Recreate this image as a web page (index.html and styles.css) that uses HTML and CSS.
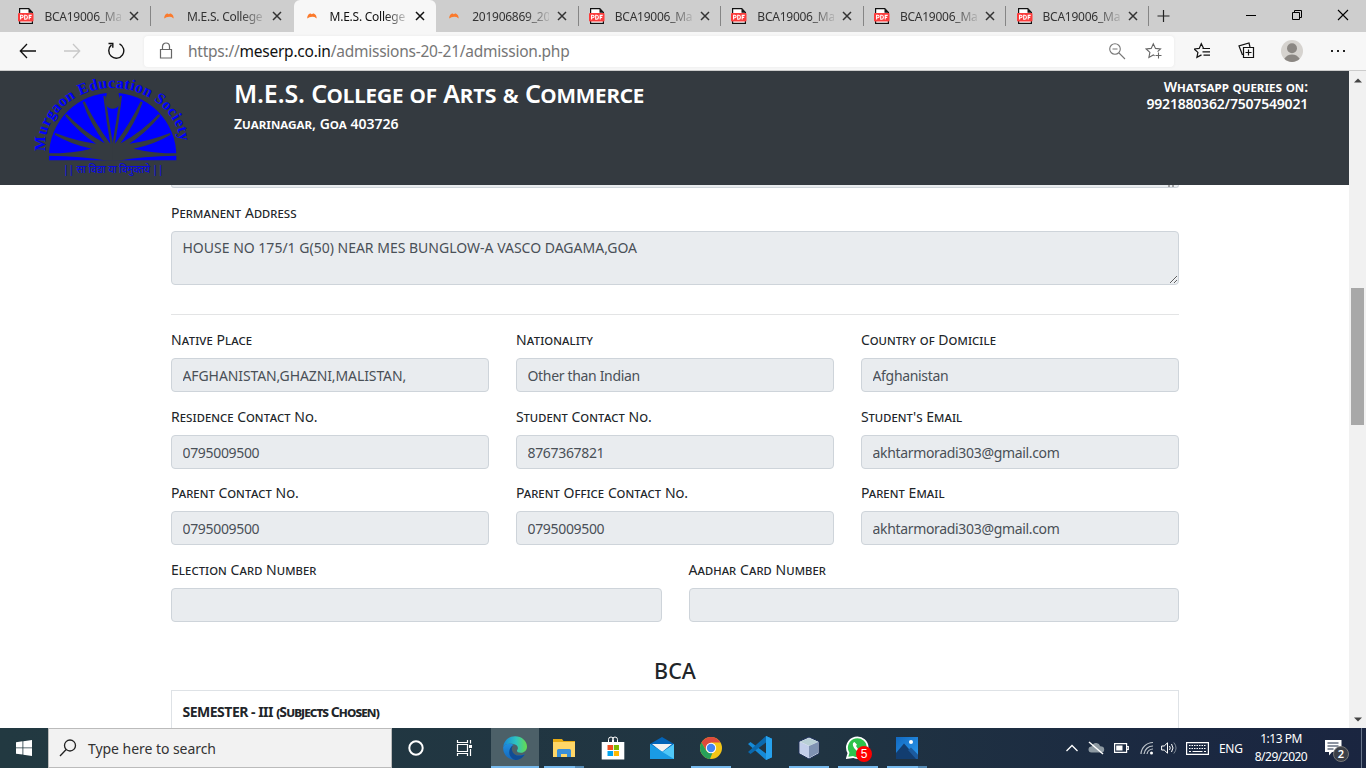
FILE: index.html
```html
<!DOCTYPE html>
<html lang="en">
<head>
<meta charset="utf-8">
<title>M.E.S. College</title>
<link rel="stylesheet" href="styles.css">
</head>
<body>
<svg class="defs" width="0" height="0">
  <symbol id="pdf" viewBox="0 0 16 16"><path d="M1.6.6h9.2l3.6 3.8v11H1.6z" fill="#fff" stroke="#111" stroke-width="1.2"/><path d="M10.5.8v4h4z" fill="#111"/><rect y="5" width="15.5" height="8.6" rx="1" fill="#fb3c3c"/><path d="M2.6 11.5V7.3h1.2q1.3 0 1.3 1.2T3.800 9.700H2.600M6.700 7.300v4h1q1.700 0 1.700-2t-1.700-2zM11.200 11.600V7.400h2.500M11.200 9.400h2" fill="none" stroke="#fff" stroke-width="1.100"/></symbol>
  <symbol id="mes" viewBox="0 0 16 16"><path d="M3.300 10.500C3 7.500 5 5.300 6.600 5.400l1.200.8 1.300-.8c2 0 3.800 2.400 3.500 5.100L10.500 9Q8 8.200 5.400 9.200z" fill="#fb7a2c"/></symbol>
  <symbol id="x" viewBox="0 0 10 10"><path d="M1 1l8 8M9 1L1 9" fill="none" stroke="currentColor" stroke-width="1.500"/></symbol>
</svg>

<div class="tabs">
  <div class="tab"><svg class="fav"><use href="#pdf"/></svg><span class="title">BCA19006_Ma</span><svg class="close"><use href="#x"/></svg></div>
  <div class="tab before-active"><svg class="fav"><use href="#mes"/></svg><span class="title">M.E.S. College</span><svg class="close"><use href="#x"/></svg></div>
  <div class="tab active"><svg class="fav"><use href="#mes"/></svg><span class="title">M.E.S. College</span><svg class="close"><use href="#x"/></svg></div>
  <div class="tab"><svg class="fav"><use href="#mes"/></svg><span class="title">201906869_20</span><svg class="close"><use href="#x"/></svg></div>
  <div class="tab"><svg class="fav"><use href="#pdf"/></svg><span class="title">BCA19006_Ma</span><svg class="close"><use href="#x"/></svg></div>
  <div class="tab"><svg class="fav"><use href="#pdf"/></svg><span class="title">BCA19006_Ma</span><svg class="close"><use href="#x"/></svg></div>
  <div class="tab"><svg class="fav"><use href="#pdf"/></svg><span class="title">BCA19006_Ma</span><svg class="close"><use href="#x"/></svg></div>
  <div class="tab last"><svg class="fav"><use href="#pdf"/></svg><span class="title">BCA19006_Ma</span><svg class="close"><use href="#x"/></svg></div>
  <svg class="plus" width="14" height="14"><path d="M6.500 1v12M.5 7h12" stroke="#222" stroke-width="1.200"/></svg>
  <div class="winbtns">
    <svg width="12" height="12"><path d="M1 6.500h10" stroke="#000"/></svg>
    <svg width="12" height="12"><path d="M1.500 3.500h7v7h-7zM3.500 3.500v-2h7v7h-2" fill="none" stroke="#000"/></svg>
    <svg width="12" height="12"><path d="M1 1l10 10M11 1L1 11" stroke="#000" stroke-width="1.100"/></svg>
  </div>
</div>

<div class="toolbar">
  <div class="nav">
    <svg width="18" height="16"><path d="M17 8H1.500M8 1L1.300 8 8 15" fill="none" stroke="#111" stroke-width="1.300"/></svg>
    <svg width="18" height="16"><path d="M1 8h15.500M10 1l6.700 7L10 15" fill="none" stroke="#c8c8c8" stroke-width="1.300"/></svg>
    <svg width="18" height="18"><path d="M12.500 1.900A7.500 7.500 0 1 1 4.500 2.900M1.500 1.500h4.300v4.300" fill="none" stroke="#111" stroke-width="1.400"/></svg>
  </div>
  <div class="address">
    <svg width="14" height="18"><path d="M1.500 7.500h11v8.500h-11zM3.500 7.500V4.500a3.500 3.500 0 0 1 7 0v3" fill="none" stroke="#666" stroke-width="1.200"/></svg>
    <span class="url">https://<b>meserp.co.in</b>/admissions-20-21/admission.php</span>
    <svg class="mag" width="18" height="18"><circle cx="7" cy="7" r="5.300" fill="none" stroke="#777" stroke-width="1.100"/><path d="M4.500 7h5M11 11l6 6" stroke="#777" stroke-width="1.100"/></svg>
    <svg width="18" height="18"><path d="M12.600 9.600L15.500 7l-5-.6L8.300 1.700 6.200 6.400l-5 .6 3.700 3.400-1 5 4.400-2.500 1.300.8M10.500 13.500h6M13.500 10.500v6" fill="none" stroke="#666" stroke-width="1.100"/></svg>
  </div>
  <div class="actions">
    <svg width="18" height="18"><path d="M9.500 6.200L7.300 1.700 5.200 6.400l-5 .6 3.700 3.400-1 5 4.600-2.500M8.500 6.500H16M8.500 9.800H16M9.500 13.200H16M7.300 1.700l2.200 4.500" fill="none" stroke="#111" stroke-width="1.200"/></svg>
    <svg width="18" height="18"><path d="M5.500 5.500h10v10h-10zM10.500 7.500v6M7.500 10.500h6M4.500 13L1 4l10-3 1 4" fill="none" stroke="#111" stroke-width="1.200"/></svg>
    <svg width="22" height="22"><circle cx="11" cy="11" r="11" fill="#d6d3cf"/><circle cx="11" cy="8.200" r="5" fill="#8b8783"/><path d="M3.300 18.800Q6 14.500 11 14.500t7.700 4.300A11 11 0 0 1 3.300 18.800z" fill="#8b8783"/></svg>
    <svg width="18" height="4"><path d="M2 1h2v2H2zM8 1h2v2H8zM14 1h2v2h-2z" fill="#222"/></svg>
  </div>
</div>

<div class="window">
  <div class="page">
    <header class="banner">
      <svg class="logo" width="160" height="105" viewBox="96 15 480 315">
        <path id="arc" d="M138 243C122 152 214 54 338 54S554 152 538 243" fill="none"/>
        <text class="arc-text"><textPath href="#arc" textLength="592" lengthAdjust="spacing">Murgaon Education Society</textPath></text>
        <path d="M147 271V258A191 190 0 0 1 529 258V271z" fill="#00f"/>
        <g fill="#343a40">
          <path id="rays" d="M145 250Q220 250 275 236 215 224 164 194L166 189Q230 214 288 221 240 190 195 137L200 132Q250 185 314 220 270 160 248 97L254 94Q285 160 331 221 318 150 310 78L316 77Q328 160 339 222V272H322Q250 258 145 257z"/>
          <use href="#rays" transform="translate(676 0) scale(-1 1)"/>
          <path d="M318 64Q323 74 318 82A23 23 0 1 0 358 82Q353 74 358 64z"/>
        </g>
        <text class="motto" x="190" y="309" textLength="300" lengthAdjust="spacingAndGlyphs">|| सा विद्या या विमुक्तये ||</text>
      </svg>
      <div class="heading"><h1>M.E.S. College of Arts &amp; Commerce</h1><p>Zuarinagar, Goa 403726</p></div>
      <div class="contact"><div class="q">Whatsapp queries on:</div><div class="num">9921880362/7507549021</div></div>
    </header>
    <main class="form">
      <div class="prev"><svg width="8" height="2"><path d="M1 0v2M5 0v2" stroke="#555"/></svg></div>
      <div class="group address-group"><label>Permanent Address</label><textarea readonly>HOUSE NO 175/1 G(50) NEAR MES BUNGLOW-A VASCO DAGAMA,GOA</textarea></div>
      <hr>
      <div class="row">
        <div class="group"><label>Native Place</label><input class="caps" readonly value="AFGHANISTAN,GHAZNI,MALISTAN,"></div>
        <div class="group"><label>Nationality</label><input readonly value="Other than Indian"></div>
        <div class="group"><label>Country of Domicile</label><input readonly value="Afghanistan"></div>
      </div>
      <div class="row">
        <div class="group"><label>Residence Contact No.</label><input readonly value="0795009500"></div>
        <div class="group"><label>Student Contact No.</label><input readonly value="8767367821"></div>
        <div class="group"><label>Student's Email</label><input readonly value="akhtarmoradi303@gmail.com"></div>
      </div>
      <div class="row">
        <div class="group"><label>Parent Contact No.</label><input readonly value="0795009500"></div>
        <div class="group"><label>Parent Office Contact No.</label><input readonly value="0795009500"></div>
        <div class="group"><label>Parent Email</label><input readonly value="akhtarmoradi303@gmail.com"></div>
      </div>
      <div class="row">
        <div class="group"><label>Election Card Number</label><input readonly></div>
        <div class="group"><label>Aadhar Card Number</label><input readonly></div>
      </div>
      <h2>BCA</h2>
      <div class="subjects">SEMESTER - III <span>(Subjects Chosen)</span></div>
    </main>
  </div>
  <div class="scrollbar">
    <svg width="8" height="5"><path d="M0 4.500L4 .5l4 4z" fill="#444"/></svg>
    <div class="thumb"></div>
    <svg width="8" height="5"><path d="M0 .5h8l-4 4z" fill="#444"/></svg>
  </div>
</div>

<div class="taskbar">
  <div class="start"><svg width="16" height="16"><path d="M0 2.200L6.500 1.300v6.200H0zM7.300 1.200L16 0v7.500H7.300zM0 8.300h6.500v6.300L0 13.700zM7.300 8.300H16V16l-8.700-1.300z" fill="#fff"/></svg></div>
  <div class="search"><svg width="18" height="18"><circle cx="11" cy="6.500" r="5.500" fill="none" stroke="#222" stroke-width="1.300"/><path d="M7.200 10.500L1 17" stroke="#222" stroke-width="1.300"/></svg><span>Type here to search</span></div>
  <div class="apps">
    <div class="app"><svg width="24" height="24"><circle cx="12" cy="12" r="6.700" fill="none" stroke="#fff" stroke-width="2"/></svg></div>
    <div class="app"><svg width="24" height="24"><path d="M4.500 4v2.500h10V4M4.500 20v-2.500h10V20M4.500 8.500h10v7h-10zM17.500 4v3.500M17.500 13v7" fill="none" stroke="#fff" stroke-width="1.200"/><path d="M16 9h3v3h-3z" fill="#fff"/></svg></div>
    <div class="app on cur"><svg width="24" height="24"><defs><linearGradient id="eg"><stop stop-color="#1687d9"/><stop offset=".55" stop-color="#2fc4c0"/><stop offset="1" stop-color="#66db4d"/></linearGradient><linearGradient id="eb" x2="0" y2="1"><stop stop-color="#1f8fe0"/><stop offset="1" stop-color="#1567ba"/></linearGradient></defs><path d="M.3 10.500C1 4.500 6 .2 12 .2c7 0 12 5 12 10.300 0 4-3 6.300-6.300 6.300-3 0-4.300-1.300-3.500-2.800 2-3-.5-5.500-4-6C6 7.500 2 8 .3 10.500z" fill="url(#eg)"/><path d="M.2 11C2 7 8 7 11 9c-4.500 1-4.500 8.500 2.500 10.300 3.500.8 7-.5 8.500-1.200-2.500 4-6 6-10.300 5.800C5 23.700-.3 18 .2 11z" fill="url(#eb)"/><path d="M10.700 9c-3 2.500-2.500 8 2.500 10.200 3.500 1 7-.2 8.600-1-2.500 4.300-6.500 5.800-9.500 5.700C4.500 21.500 4.500 12 10.700 9z" fill="#114c94"/></svg></div>
    <div class="app on split"><svg width="24" height="24"><path d="M1 3h9l1.500 2H23v16H1z" fill="#e8ab14"/><path d="M1 6h22v15H1z" fill="#ffd667"/><path d="M5 21v-6.500Q5 13 6.500 13h11q1.500 0 1.500 1.500V21h-4v-3H9v3z" fill="#3a8fd8"/></svg></div>
    <div class="app"><svg width="24" height="24"><path d="M7.500 7V3.500q0-2.500 2.500-2.500t2.500 2.500V6M11.500 6V3.500q0-2.500 2.500-2.500t2.500 2.500V7" fill="none" stroke="#fff"/><path d="M.7 6h22.600v17.500H.7z" fill="#fff"/><path d="M6.500 9H12v5H6.500z" fill="#f25022"/><path d="M12.800 9H18v5h-5.200z" fill="#7fba00"/><path d="M6.500 15H12v5H6.500z" fill="#00a4ef"/><path d="M12.800 15H18v5h-5.200z" fill="#ffb900"/></svg></div>
    <div class="app"><svg width="24" height="24"><path d="M0 8L12 1l12 7v8H0z" fill="#0364b8"/><path d="M2 8h20L12 16z" fill="#f3f3f3"/><path d="M0 8l12 8.500L24 8v15H0z" fill="#28a8ea"/><path d="M0 8l24 15H0z" fill="#1a9be4"/><path d="M24 8v15L12.500 16z" fill="#50c8f8"/></svg></div>
    <div class="app on"><svg width="24" height="24"><circle cx="12" cy="12" r="11" fill="#f3c517"/><path d="M2.500 6.500A11 11 0 0 1 21.500 6.500H12L7 14z" fill="#df4a3d"/><path d="M2.500 6.500L7.300 14.700Q9 17.500 13.500 16.800L11 23A11 11 0 0 1 2.500 6.500z" fill="#27a05a"/><circle cx="12" cy="12" r="5.200" fill="#fff"/><circle cx="12" cy="12" r="4.200" fill="#4285f4"/></svg></div>
    <div class="app"><svg width="24" height="24"><path d="M18 0l6 2.800v18.400L18 24 0 8l2.500-2L18 17.500z" fill="#168bd8"/><path d="M18 0v6.500L2.500 18 0 16z" fill="#0a69ae"/><path d="M18 0l6 2.800v18.400L18 24z" fill="#26a2ee"/></svg></div>
    <div class="app on"><svg width="24" height="24"><path d="M12 1l10 4.500v12L12 23 2 17.500v-12z" fill="#e8edf2" stroke="#1e315d" stroke-width="1"/><path d="M12 2l9 3.800-9 4-9-4z" fill="#b9d0d6"/><path d="M3 6l9 4v12L3 17z" fill="#c3cfea"/><path d="M21 6l-9 4v12l9-5z" fill="#7f92b2"/></svg></div>
    <div class="app on"><svg width="24" height="24"><path d="M1 22l1.500-5A10.300 10.300 0 1 1 7 21z" fill="#2dc24b" stroke="#fff" stroke-width="1.800"/><path d="M8.500 6C6 7 6.500 10 9 13s6 4.500 8 2.500l.5-2-2.500-1.300-1.500 1.300q-2.500-1-3.500-3.500l1-1.200z" fill="#fff"/></svg><span class="five">5</span></div>
    <div class="app on split"><svg width="24" height="24"><defs><linearGradient id="ph" x2="1" y2="1"><stop stop-color="#1269c0"/><stop offset="1" stop-color="#2c9bf0"/></linearGradient></defs><path d="M1 1h22v22H1z" fill="url(#ph)"/><path d="M1 17L9 7.500 22 22v1H1z" fill="#123d70"/><path d="M13 14l3-2.500 7 7V23h-2z" fill="#1c5a9d"/><circle cx="16" cy="6" r="2" fill="#fff"/></svg></div>
  </div>
  <div class="tray">
    <svg width="12" height="12"><path d="M.5 9L6 3.500 11.500 9" fill="none" stroke="#fff" stroke-width="1.300"/></svg>
    <svg class="cloud" width="17" height="14"><path d="M3.500 11.500a3 3 0 0 1 0-6Q5 1.500 8.500 2q3 .5 3.700 3.300 4 0 4 3.200t-3 3z" fill="#8d99a2"/><path d="M1 1l14 12" stroke="#fff" stroke-width="1.500"/></svg>
    <svg class="batt" width="15" height="10"><path d="M.6.600h12v8.800H.6zM13 3.500h1.300v3H13" fill="none" stroke="#fff" stroke-width="1.200"/><path d="M2.200 2.500H8.500v5H2.200z" fill="#fff"/></svg>
    <svg class="wifi" width="14" height="14"><path d="M1 13A12 12 0 0 1 13 1.500M4 13A9 9 0 0 1 13 5M7 13a6 6 0 0 1 6-5" fill="none" stroke="#c0c7cd" stroke-width="1.200"/><circle cx="11.500" cy="12" r="1.500" fill="#fff"/></svg>
    <svg class="spk" width="17" height="14"><path d="M.6 5h2.600L6.500 1.800v10.400L3.200 9H.6z" fill="none" stroke="#fff"/><path d="M8.500 5q1.500 2 0 4M10.500 3q3 4 0 8" fill="none" stroke="#fff"/><path d="M12.800 1.500q4.500 5.500 0 11" fill="none" stroke="#7d8895"/></svg>
    <svg class="kbd" width="23" height="13"><path d="M.6.600h21.800v11.800H.6z" fill="none" stroke="#fff" stroke-width="1.200"/><path d="M3 3.500h17M3 6.500h17" stroke="#fff" stroke-width="1.200" stroke-dasharray="1.500 1"/><path d="M3 9.500h2M6.500 9.500h10M18 9.500h2" stroke="#fff"/></svg>
    <span class="lang">ENG</span>
    <div class="clock"><span class="time">1:13 PM</span><span>8/29/2020</span></div>
    <div class="notes"><svg width="17" height="16"><path d="M0 0h16.500v12H7l-3 3.500V12H0z" fill="#fff"/><path d="M2.500 3h11M2.500 6h11M2.500 9h6" stroke="#1b2942"/></svg><span class="count">2</span></div>
  </div>
</div>
</body>
</html>
```
FILE: styles.css
```css
* { box-sizing: border-box; }
body { margin: 0; width: 1366px; height: 768px; overflow: hidden; display: flex; flex-direction: column; font-family: "Noto Sans", "Open Sans", sans-serif; font-size: 14px; color: #212529; background: #fff; }
svg { flex: none; display: block; }
.defs { position: absolute; }

.tabs { height: 32px; flex: none; display: flex; align-items: center; background: #cecece; padding-left: 8.400px; }
.tab { width: 142.600px; height: 32px; flex: none; display: flex; align-items: center; padding-left: 10px; color: #333; }
.tab::after { content: ""; width: 1px; height: 20px; background: #858585; margin-left: 10.500px; }
.tab.active::after, .tab.before-active::after { background: transparent; }
.tab.active { background: #f7f7f7; color: #111; border-radius: 6px 6px 0 0; }
.tab.last { width: 142px; }
.fav { width: 16px; height: 16px; margin-right: 10px; }
.title { width: 77px; margin-right: 8px; white-space: nowrap; font-size: 12px; letter-spacing: -0.250px; -webkit-mask-image: linear-gradient(90deg, #000 70%, rgba(0, 0, 0, .15)); mask-image: linear-gradient(90deg, #000 70%, rgba(0, 0, 0, .15)); }
.close { width: 10px; height: 10px; }
.plus { margin-left: 8px; }
.winbtns { margin-left: auto; display: flex; gap: 34px; padding: 0 17px 3px 0; }

.toolbar { height: 39px; flex: none; display: flex; align-items: center; background: #f7f7f7; border-bottom: 1px solid #ccc; }
.nav { display: flex; gap: 26px; align-items: center; width: 144px; padding-left: 19px; }
.address { width: 1030px; height: 31px; background: #fff; border-radius: 4px; display: flex; align-items: center; padding: 0 11px 0 15px; box-shadow: 0 0 3px #e8e8e8; }
.url { margin-left: 15px; font-size: 15.500px; letter-spacing: -0.240px; color: #767676; white-space: nowrap; }
.url b { color: #111; font-weight: 400; }
.mag { margin: 0 19px 0 auto; }
.actions { display: flex; align-items: center; gap: 26px; padding-left: 20px; }
.actions svg:nth-child(3) { margin-left: -1px; }

.window { flex: 1; min-height: 0; display: flex; }
.page { width: 1349px; overflow: hidden; }
.banner { height: 114px; background: #343a40; color: #fff; display: flex; padding: 4px 41px 0 32px; font-weight: 600; }
.logo { overflow: visible; }
.arc-text { font: bold 47px "Liberation Serif", serif; fill: #00f; }
.motto { font: 500 34px "Noto Sans", "Noto Sans Devanagari", sans-serif; fill: #00f; fill-opacity: .85; }
.heading { margin-left: 42px; font-variant: small-caps; }
.heading h1 { margin: 0; font-size: 25px; line-height: 36px; letter-spacing: -0.140px; font-weight: 600; white-space: nowrap; }
.heading p { margin: 0; font-size: 14px; line-height: 26px; }
.contact { margin-left: auto; padding-top: 3px; text-align: right; font-size: 14px; line-height: 17px; font-variant: small-caps; }
.num { letter-spacing: -0.200px; }

.form { width: 1008px; margin-left: 171px; }
.prev { height: 3px; background: #e9ecef; border: 1px solid #ced4da; border-top: 0; border-radius: 0 0 4px 4px; display: flex; justify-content: flex-end; padding-right: 2px; }
.group { display: flex; flex-direction: column; flex: 1; min-width: 0; }
.address-group { padding-top: 14px; }
label { font-size: 14px; line-height: 22.500px; height: 29px; letter-spacing: 0.070px; font-variant: small-caps; white-space: nowrap; }
input, textarea { display: block; width: 100%; height: 34px; margin: 0; padding: 1px 10.500px 0; background: #e9ecef; border: 1px solid #ced4da; border-radius: 4px; font: 14px "Noto Sans", "Open Sans", sans-serif; letter-spacing: -0.330px; color: #495057; outline: 0; }
textarea { height: 54px; padding-top: 5px; line-height: 22px; letter-spacing: 0; resize: both; overflow: hidden; }
.caps { letter-spacing: -0.100px; }
hr { border: 0; border-top: 1px solid #e3e4e5; margin: 29px 0 14px; }
.row { display: flex; gap: 27px; height: 76.700px; }
h2 { margin: 19px 0 0; height: 32px; line-height: 32px; text-align: center; font-size: 21.500px; font-weight: 500; }
.subjects { height: 60px; margin-top: 3px; border: 1px solid #dee2e6; padding: 10px 10.500px; line-height: 22px; font-size: 14px; letter-spacing: -0.500px; font-weight: 700; white-space: nowrap; }
.subjects span { font-variant: small-caps; letter-spacing: -0.900px; }

.scrollbar { width: 17px; background: #f1f1f1; display: flex; flex-direction: column; align-items: center; padding: 7px 0 6px; }
.thumb { width: 13px; height: 137px; margin: 205px 0 auto; background: #a8a8a8; }

.taskbar { height: 40px; flex: none; display: flex; color: #fff; background: linear-gradient(90deg, #223941, #203442 60%, #1b2941 85%, #1a2540); }
.start { width: 48px; display: grid; place-items: center; }
.search { width: 344px; background: #f2f2f2; border: 1px solid #bbb; display: flex; align-items: center; padding-left: 10px; gap: 11px; color: #333; font-size: 14px; letter-spacing: -0.050px; }
.apps { display: flex; gap: 1px; }
.app { width: 48px; height: 40px; display: grid; place-items: center; position: relative; }
.app.cur { background: #4c6068; margin-left: 1px; }
.app.on::after { content: ""; position: absolute; left: 4px; right: 4px; bottom: 0; height: 2px; background: #76b9ed; }
.app.cur::after { left: 0; right: 0; }
.app.split::after { background: linear-gradient(90deg, #76b9ed 78%, #5489b3 78%); }
.five { position: absolute; left: 22px; top: 18px; width: 16px; height: 16px; border-radius: 50%; background: #f00; font: 12px/16px "Liberation Sans", sans-serif; text-align: center; }
.tray { margin-left: auto; display: flex; align-items: center; margin-right: 4px; border-right: 1px solid #68758a; }
.cloud { margin-left: 10px; }
.batt { margin-left: 9px; }
.wifi { margin-left: 11px; }
.spk { margin-left: 7px; }
.kbd { margin-left: 8px; }
.lang { width: 24px; margin-left: 10px; font-size: 12px; letter-spacing: -0.300px; }
.clock { width: 54px; margin-left: 11px; display: flex; flex-direction: column; align-items: center; font-size: 12px; line-height: 18px; letter-spacing: -0.500px; white-space: nowrap; }
.notes { width: 36px; margin-left: 17px; position: relative; }
.count { position: absolute; left: 8px; top: 6px; width: 16px; height: 16px; border-radius: 50%; background: #3b3f47; border: 1px solid #777; font-size: 11px; line-height: 14px; text-align: center; font-weight: 600; }
```
